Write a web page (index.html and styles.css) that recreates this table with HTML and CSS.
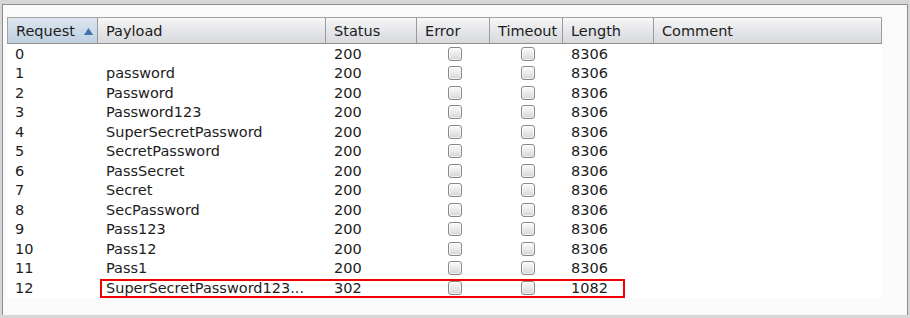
FILE: index.html
```html
<!DOCTYPE html>
<html>
<head>
<meta charset="utf-8">
<link rel="stylesheet" href="styles.css">
</head>
<body>
<div class="panel">
  <div class="table">
    <div class="head">
      <div class="hc sorted">Request<svg class="sort" width="9" height="7" viewBox="0 0 9 7"><polygon points="4.5,0 9,7 0,7" fill="#3f74ab"/></svg></div>
      <div class="hc">Payload</div>
      <div class="hc">Status</div>
      <div class="hc">Error</div>
      <div class="hc">Timeout</div>
      <div class="hc">Length</div>
      <div class="hc">Comment</div>
    </div>
    <div class="row"><div class="c">0</div><div class="c"></div><div class="c">200</div><div class="cb"><span class="box"></span></div><div class="cb"><span class="box"></span></div><div class="c">8306</div><div class="c"></div></div>
    <div class="row"><div class="c">1</div><div class="c">password</div><div class="c">200</div><div class="cb"><span class="box"></span></div><div class="cb"><span class="box"></span></div><div class="c">8306</div><div class="c"></div></div>
    <div class="row"><div class="c">2</div><div class="c">Password</div><div class="c">200</div><div class="cb"><span class="box"></span></div><div class="cb"><span class="box"></span></div><div class="c">8306</div><div class="c"></div></div>
    <div class="row"><div class="c">3</div><div class="c">Password123</div><div class="c">200</div><div class="cb"><span class="box"></span></div><div class="cb"><span class="box"></span></div><div class="c">8306</div><div class="c"></div></div>
    <div class="row"><div class="c">4</div><div class="c">SuperSecretPassword</div><div class="c">200</div><div class="cb"><span class="box"></span></div><div class="cb"><span class="box"></span></div><div class="c">8306</div><div class="c"></div></div>
    <div class="row"><div class="c">5</div><div class="c">SecretPassword</div><div class="c">200</div><div class="cb"><span class="box"></span></div><div class="cb"><span class="box"></span></div><div class="c">8306</div><div class="c"></div></div>
    <div class="row"><div class="c">6</div><div class="c">PassSecret</div><div class="c">200</div><div class="cb"><span class="box"></span></div><div class="cb"><span class="box"></span></div><div class="c">8306</div><div class="c"></div></div>
    <div class="row"><div class="c">7</div><div class="c">Secret</div><div class="c">200</div><div class="cb"><span class="box"></span></div><div class="cb"><span class="box"></span></div><div class="c">8306</div><div class="c"></div></div>
    <div class="row"><div class="c">8</div><div class="c">SecPassword</div><div class="c">200</div><div class="cb"><span class="box"></span></div><div class="cb"><span class="box"></span></div><div class="c">8306</div><div class="c"></div></div>
    <div class="row"><div class="c">9</div><div class="c">Pass123</div><div class="c">200</div><div class="cb"><span class="box"></span></div><div class="cb"><span class="box"></span></div><div class="c">8306</div><div class="c"></div></div>
    <div class="row"><div class="c">10</div><div class="c">Pass12</div><div class="c">200</div><div class="cb"><span class="box"></span></div><div class="cb"><span class="box"></span></div><div class="c">8306</div><div class="c"></div></div>
    <div class="row"><div class="c">11</div><div class="c">Pass1</div><div class="c">200</div><div class="cb"><span class="box"></span></div><div class="cb"><span class="box"></span></div><div class="c">8306</div><div class="c"></div></div>
    <div class="row hl"><div class="c">12</div><div class="c">SuperSecretPassword123...</div><div class="c">302</div><div class="cb"><span class="box"></span></div><div class="cb"><span class="box"></span></div><div class="c">1082</div><div class="c"></div><span class="mark"></span></div>
  </div>
</div>
</body>
</html>
```

FILE: styles.css
```css
html, body {
  margin: 0;
  padding: 0;
}
body {
  width: 910px;
  height: 318px;
  overflow: hidden;
  background: #d6d6d6;
  font-family: "DejaVu Sans", "Liberation Sans", sans-serif;
  font-size: 14.5px;
  color: #1c1c1c;
}
.panel {
  margin: 4px 0 0 2px;
  border: 1px solid #8c8c8c;
  border-bottom: none;
  background: #fafafa;
  padding: 12px 0 0 4px;
  box-sizing: content-box;
  width: 900px;
  height: 298px;
}
.table {
  width: 875px;
  height: 281px;
  background: #ffffff;
}
.head, .row {
  display: grid;
  grid-template-columns: 91px 228px 91px 73px 73px 91px 228px;
}
.head {
  height: 25px;
  border-top: 1px solid #a3a3a3;
  border-bottom: 1px solid #8f8f8f;
  background: linear-gradient(#f6f6f7, #e4e5e8 55%, #d9dadd);
}
.hc {
  display: flex;
  align-items: center;
  padding-left: 8px;
  border-right: 1px solid #9a9a9a;
  white-space: nowrap;
  overflow: hidden;
}
.hc:first-child {
  border-left: 1px solid #a3a3a3;
}
.hc.sorted {
  background: linear-gradient(#dce6f0, #cbd9e7 55%, #bfd0e1);
}
.sort {
  margin-left: 9px;
  margin-top: 1px;
}
.row {
  height: 19.5px;
  position: relative;
}
.c {
  display: flex;
  align-items: center;
  padding-left: 8px;
  white-space: nowrap;
  overflow: hidden;
}
.cb {
  display: flex;
  align-items: center;
  justify-content: center;
  padding-left: 2px;
}
.box {
  width: 12px;
  height: 12px;
  border: 1px solid #888888;
  border-radius: 3px;
  background: linear-gradient(#fbfbfb, #e6e6e6 60%, #d4d4d4);
  box-shadow: inset 0 0 0 1px rgba(255,255,255,0.6);
}
.mark {
  position: absolute;
  left: 93px;
  top: 1px;
  width: 521px;
  height: 15px;
  border: 2px solid #f00000;
}
```
